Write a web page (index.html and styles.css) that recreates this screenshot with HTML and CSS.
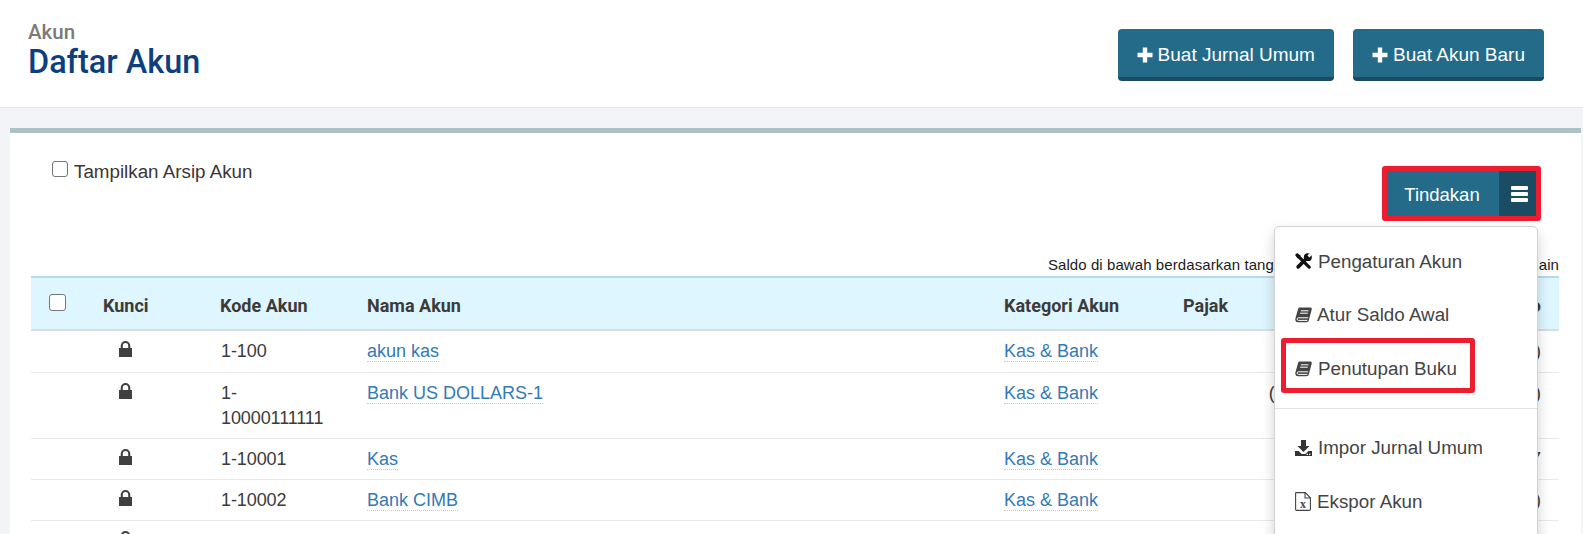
FILE: index.html
```html
<!DOCTYPE html>
<html lang="id">
<head>
<meta charset="utf-8">
<title>Daftar Akun</title>
<link rel="stylesheet" href="styles.css">
</head>
<body>
<svg class="defs" width="0" height="0" aria-hidden="true">
  <symbol id="i-plus" viewBox="0 0 16 16"><path d="M5.800 .5h4.400v5.300h5.300v4.400h-5.300v5.300H5.800v-5.300H.5V5.800h5.300z" fill="currentColor"/></symbol>
  <symbol id="i-lock" viewBox="0 0 13 16"><path d="M0 7h1.700V4.800a4.800 4.800 0 0 1 9.600 0V7H13v9H0zM3.800 7h5.400V4.800a2.700 2.700 0 0 0-5.400 0z" fill="currentColor" fill-rule="evenodd"/></symbol>
  <symbol id="i-book" viewBox="0 0 17 16"><path d="M4.800 .6H15.500c1 0 1.500.8 1.200 1.800L14 12.800c-.3 1.200-1.100 2.400-2.500 2.400H3C1.300 15.200.3 14 .3 12.500c0-.4 0-.7.100-1L3 2.200C3.300 1.200 3.900.6 4.800.6z" fill="currentColor"/><path d="M5.800 3.800h7.700M5.100 6.200h7.700" stroke="#fff" stroke-width="1" fill="none"/><path d="M13.200 10.800H3.400c-1.700 0-1.700 2.600 0 2.600h8.900" stroke="#fff" stroke-width="1" fill="none"/></symbol>
</svg>

<header class="topbar">
  <div class="titles">
    <div class="crumb">Akun</div>
    <h1 class="title">Daftar Akun</h1>
  </div>
  <div class="top-actions">
    <a class="btn-main"><svg class="plus"><use href="#i-plus"/></svg>Buat Jurnal Umum</a>
    <a class="btn-main"><svg class="plus"><use href="#i-plus"/></svg>Buat Akun Baru</a>
  </div>
</header>

<main class="panel">
  <div class="tools">
    <label class="archive"><input type="checkbox" class="check">Tampilkan Arsip Akun</label>
    <div class="action-wrap">
      <div class="action-group">
        <span class="action-label">Tindakan</span>
        <span class="action-toggle"><span></span><span></span><span></span></span>
      </div>
      <div class="menu">
        <a class="menu-item">
          <svg class="mi" viewBox="0 0 18 18"><path d="M3 3l12 12" stroke="#111" stroke-width="3.400" stroke-linecap="round" fill="none"/><path d="M0 2.200L2.200 0l4 3-3 3z" fill="#111"/><path d="M3.300 14.700L13 5" stroke="#111" stroke-width="3.800" stroke-linecap="round" fill="none"/><circle cx="13.600" cy="4.400" r="4.200" fill="#111"/><path d="M14.200 3.800L18.500-.5" stroke="#fff" stroke-width="3"/></svg>
          Pengaturan Akun
        </a>
        <a class="menu-item menu-item--tight"><svg class="mi mi--book"><use href="#i-book"/></svg>Atur Saldo Awal</a>
        <a class="menu-item"><svg class="mi mi--book"><use href="#i-book"/></svg>Penutupan Buku</a>
        <div class="menu-divider"></div>
        <a class="menu-item">
          <svg class="mi mi--book" viewBox="0 0 17 16"><path d="M6 0h5v6h3.500L8.500 12 2.500 6H6zM0 11h3.600l3 3h3.800l3-3H17v5H0z" fill="#333"/><path d="M11.600 14.300h1.400M14 14.300h1.400" stroke="#fff" stroke-width="1.200"/></svg>
          Impor Jurnal Umum
        </a>
        <a class="menu-item menu-item--tight">
          <svg class="mi mi--file" viewBox="0 0 16 19"><path d="M1.300.6h8.900l5.200 5.200v11.500c0 .6-.5 1.100-1.100 1.100H1.300c-.4 0-.7-.5-.7-1.100V1.300c0-.4.3-.7.700-.7zM10 .8v5.200h5.200" fill="none" stroke="#444" stroke-width="1.100"/><text x="8" y="16" class="xls">x</text></svg>
          Ekspor Akun
        </a>
      </div>
      <span class="mark-menu"></span>
    </div>
  </div>

  <p class="note">Saldo di bawah berdasarkan tanggal transaksi dan termasuk mata uang lain</p>

  <table class="accounts">
    <colgroup>
      <col class="c-check"><col class="c-lock"><col class="c-code"><col class="c-name"><col class="c-cat"><col class="c-tax"><col>
    </colgroup>
    <thead>
      <tr>
        <th><input type="checkbox" class="check check--head"></th>
        <th>Kunci</th>
        <th>Kode Akun</th>
        <th>Nama Akun</th>
        <th>Kategori Akun</th>
        <th>Pajak</th>
        <th class="num">Saldo</th>
      </tr>
    </thead>
    <tbody>
      <tr>
        <td></td><td class="lock"><svg class="lock-i"><use href="#i-lock"/></svg></td>
        <td class="code">1-100</td><td><a class="lnk">akun kas</a></td><td><a class="lnk">Kas &amp; Bank</a></td><td></td><td class="num">(1.000.000)</td>
      </tr>
      <tr>
        <td></td><td class="lock"><svg class="lock-i"><use href="#i-lock"/></svg></td>
        <td class="code">1-<br>10000111111</td><td><a class="lnk">Bank US DOLLARS-1</a></td><td><a class="lnk">Kas &amp; Bank</a></td><td></td><td class="num">(US$ 1.100,00) (Rp 1.400.000,00)</td>
      </tr>
      <tr>
        <td></td><td class="lock"><svg class="lock-i"><use href="#i-lock"/></svg></td>
        <td class="code">1-10001</td><td><a class="lnk">Kas</a></td><td><a class="lnk">Kas &amp; Bank</a></td><td></td><td class="num">1.027</td>
      </tr>
      <tr>
        <td></td><td class="lock"><svg class="lock-i"><use href="#i-lock"/></svg></td>
        <td class="code">1-10002</td><td><a class="lnk">Bank CIMB</a></td><td><a class="lnk">Kas &amp; Bank</a></td><td></td><td class="num">(1.000.000)</td>
      </tr>
      <tr>
        <td></td><td class="lock"><svg class="lock-i"><use href="#i-lock"/></svg></td>
        <td class="code">1-10003</td><td><a class="lnk">Bank BCA</a></td><td><a class="lnk">Kas &amp; Bank</a></td><td></td><td class="num">(1.000.000)</td>
      </tr>
    </tbody>
  </table>
</main>
</body>
</html>
```
FILE: styles.css
```css
* { box-sizing: border-box; }
html, body { height: 534px; overflow: hidden; }
body { margin: 0; background: #f2f4f8; font-family: "Liberation Sans", Arial, sans-serif; font-size: 18px; color: #333; }
.defs { position: absolute; }

.topbar { height: 108px; background: #fff; border-bottom: 1px solid #e4e7ed; display: flex; justify-content: space-between; padding: 22px 39px 0 28px; }
.crumb { font-family: Roboto, sans-serif; font-size: 20.500px; line-height: 20px; font-weight: 500; color: #7a7a7a; }
.title { margin: 1px 0 0; font-family: Roboto, sans-serif; font-size: 32.400px; line-height: 38px; font-weight: 500; color: #0d3f7f; }
.top-actions { display: flex; gap: 19px; padding-top: 7px; align-items: flex-start; }
.btn-main { height: 52px; padding: 3px 19px 0; display: flex; align-items: center; gap: 5px; color: #fff; font-size: 19px; background: #246b8a; border-bottom: 4px solid #1a4b61; border-radius: 4px; }
.plus { width: 16px; height: 16px; }

.panel { margin: 20px 2px 0 10px; background: #fff; border-top: 5px solid #aec1c5; padding: 0 22px 0 21px; }
.tools { display: flex; justify-content: space-between; align-items: flex-start; height: 110px; padding-top: 25px; }
.check { appearance: none; margin: 0; width: 16px; height: 16px; border: 1px solid #767676; border-radius: 3px; background: #fff; }
.archive { display: flex; align-items: flex-start; gap: 6px; margin-left: 21px; font-size: 18.800px; line-height: 28px; color: #3d3535; }
.archive .check { margin-top: 3px; }

.action-wrap { position: relative; width: 159px; margin: 8px 18px 0 0; }
.action-group { height: 55px; border: 5px solid #ed1c2e; border-radius: 3px; display: flex; background: #246b8a; color: #fff; }
.action-label { width: 112px; padding-right: 2px; font-size: 18.500px; line-height: 48px; text-align: center; }
.action-toggle { flex: 1; padding-left: 4px; background: #1a4d63; display: flex; flex-direction: column; justify-content: center; align-items: center; gap: 2px; }
.action-toggle span { width: 17px; height: 4px; background: #fff; border-radius: 1px; }

.menu { position: absolute; z-index: 5; top: 60px; right: 3px; width: 264px; height: 400px; background: #fff; border: 1px solid #d2d2d2; border-radius: 5px; box-shadow: 0 6px 14px rgba(0,0,0,.18); padding-top: 8px; }
.menu-item { display: flex; align-items: center; height: 53.500px; padding-left: 20px; gap: 6px; font-size: 18.800px; color: #444; }
.menu-item--tight { gap: 5px; }
.menu-divider { height: 1px; background: #e2e2e2; margin: 12.500px 0; }
.mi { width: 17px; height: 17px; flex: none; }
.mi--book { height: 16px; color: #444; }
.mi--file { width: 16px; height: 19px; margin-right: 1px; }
.xls { font: 700 12px "Liberation Serif", serif; fill: #444; text-anchor: middle; }
.mark-menu { position: absolute; z-index: 6; top: 172px; right: 66px; width: 194px; height: 55px; border: 5px solid #ed1c2e; border-radius: 3px; }

.note { margin: 0; height: 33px; padding-top: 10px; font-size: 15px; line-height: 23px; letter-spacing: .08px; text-align: right; color: #1c1c1c; white-space: nowrap; }

.accounts { width: 100%; table-layout: fixed; border-collapse: separate; border-spacing: 0; }
.c-check { width: 64px; }
.c-lock { width: 117px; }
.c-code { width: 147px; }
.c-name { width: 637px; }
.c-cat { width: 179px; }
.c-tax { width: 90px; }
.accounts th { height: 55px; background: #def6ff; border-top: 2px solid #b3dbe9; border-bottom: 2px solid #dddddd; padding: 3px 8px 0; text-align: left; font-family: Roboto, sans-serif; font-size: 18px; font-weight: 700; color: #3d3a38; }
.accounts td { padding: 8px 8px 7px; line-height: 25px; vertical-align: top; border-bottom: 1px solid #e9e9e9; color: #3b3b3b; }
.accounts tbody tr:first-child td { padding-bottom: 8px; }
.accounts .num { text-align: right; white-space: nowrap; padding-left: 0; padding-right: 18px; }
.accounts .code { padding-left: 9px; letter-spacing: -.1px; }
.check--head { width: 17px; height: 17px; margin: 0 0 0 10px; display: block; position: relative; top: -3px; }
.accounts .lock { padding-left: 24px; }
.lock-i { width: 13px; height: 16px; color: #413f40; display: block; margin-top: 2px; }
.lnk { color: #337ab7; border-bottom: 1px dotted #c9c9c9; }
```
